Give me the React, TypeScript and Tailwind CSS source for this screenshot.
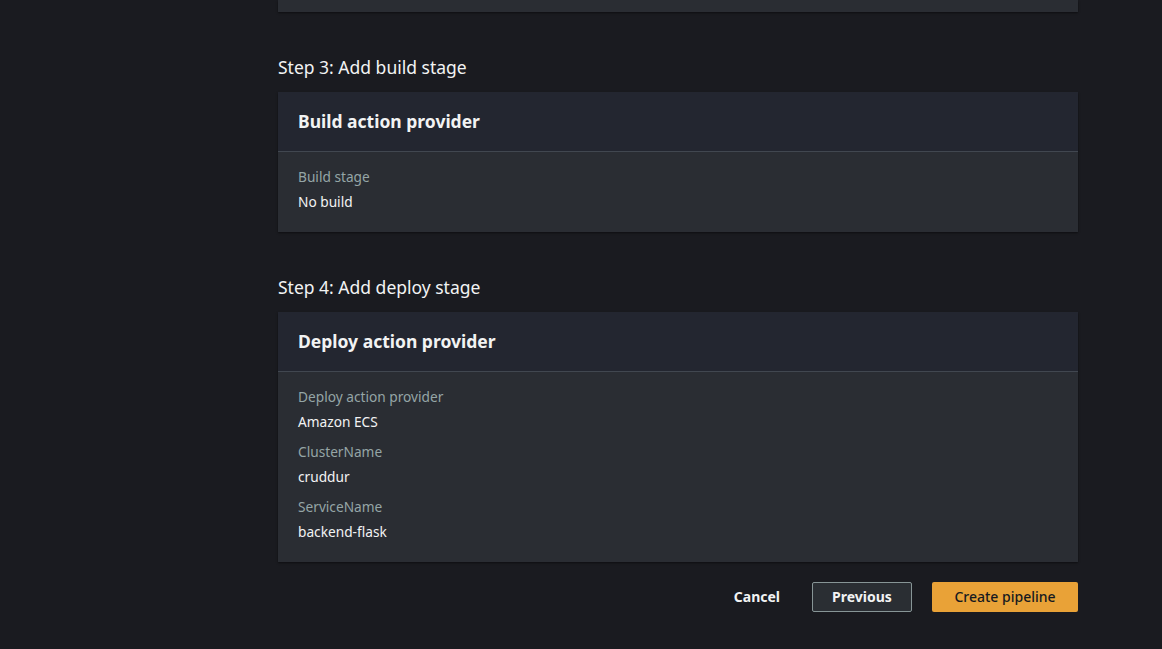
import React from 'react';

type Field = { label: string; value: string };

const Card: React.FC<{ title: string; fields: Field[] }> = ({ title, fields }) => (
  <div className="bg-[#2a2d33] shadow-[0_1px_2px_rgba(0,0,0,0.5)]">
    <div className="bg-[#232630] px-5 h-[60px] flex items-center border-b border-[#414750]">
      <h3 className="text-[17.5px] font-bold text-[#f2f3f3]">{title}</h3>
    </div>
    <div className="px-5 pt-[14px] pb-[19px] flex flex-col gap-2">
      {fields.map((f) => (
        <div key={f.label} className="flex flex-col gap-[3px]">
          <span className="text-[13.7px] leading-[22px] text-[#95a5a6]">{f.label}</span>
          <span className="text-[13.7px] leading-[22px] text-[#f2f3f3]">{f.value}</span>
        </div>
      ))}
    </div>
  </div>
);

export default function App() {
  return (
    <div
      className="min-h-[649px] bg-[#1a1b20] text-[#d5dbdb]"
      style={{ fontFamily: '"Noto Sans", Roboto, sans-serif' }}
    >
      <div className="w-[800px] ml-[278px] pb-[37px]">
        {/* tail of Step 2 card */}
        <div className="h-3 bg-[#2a2d33] shadow-[0_1px_2px_rgba(0,0,0,0.5)]" />

        <h2 className="mt-[43px] mb-[13px] text-[17.5px] leading-6 text-[#f2f3f3]">Step 3: Add build stage</h2>
        <Card title="Build action provider" fields={[{ label: 'Build stage', value: 'No build' }]} />

        <h2 className="mt-[43px] mb-[13px] text-[17.5px] leading-6 text-[#f2f3f3]">Step 4: Add deploy stage</h2>
        <Card
          title="Deploy action provider"
          fields={[
            { label: 'Deploy action provider', value: 'Amazon ECS' },
            { label: 'ClusterName', value: 'cruddur' },
            { label: 'ServiceName', value: 'backend-flask' },
          ]}
        />

        <div className="mt-5 flex items-center justify-end">
          <button className="text-sm font-bold text-[#f2f3f3] mr-8">Cancel</button>
          <button className="w-[100px] h-[30px] text-sm font-bold text-[#f2f3f3] bg-[#2a2e33] border border-[#879596] rounded-[2px] mr-5">
            Previous
          </button>
          <button className="w-[146px] h-[30px] text-sm font-medium text-[#16191f] bg-[#e9a237] rounded-[2px]">
            Create pipeline
          </button>
        </div>
      </div>
    </div>
  );
}
